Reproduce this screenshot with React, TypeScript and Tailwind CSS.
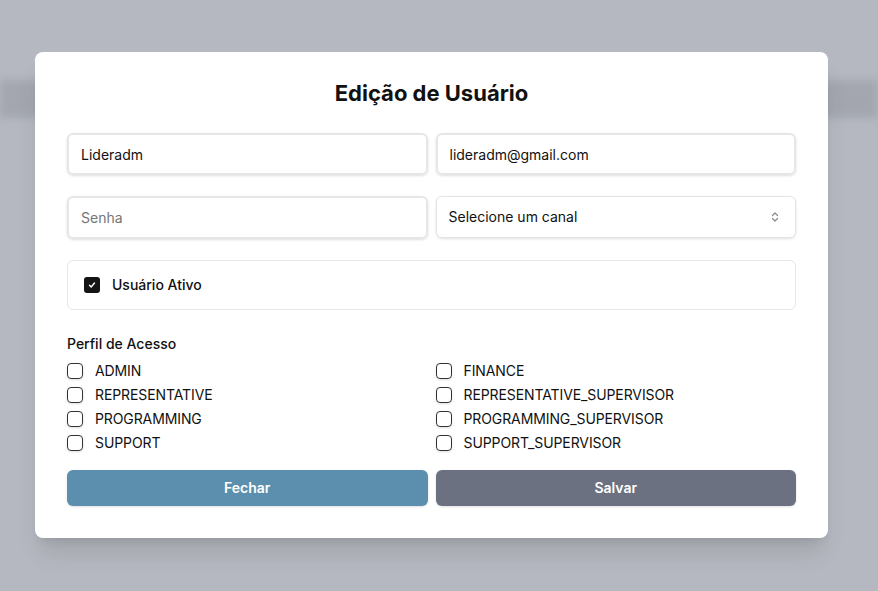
import React from "react";

const perfis = [
  "ADMIN",
  "FINANCE",
  "REPRESENTATIVE",
  "REPRESENTATIVE_SUPERVISOR",
  "PROGRAMMING",
  "PROGRAMMING_SUPERVISOR",
  "SUPPORT",
  "SUPPORT_SUPERVISOR",
];

const App = () => {
  return (
    <div className="relative h-[591px] w-full overflow-hidden bg-[#b5b8c0] font-['Inter',sans-serif]">
      {/* blurred page header behind the overlay */}
      <div className="mt-[80px] h-[38px] w-full bg-[#a3a6af] blur-[4px]" />

      {/* modal */}
      <div className="absolute left-[35px] top-[52px] w-[793px] rounded-lg bg-white px-8 pb-8 pt-[26px] shadow-xl">
        <h2 className="mb-[25px] text-center text-[22px] font-bold leading-[30px] text-[#111]">
          Edição de Usuário
        </h2>

        <div className="grid grid-cols-2 gap-x-2 gap-y-[21px]">
          <input
            className="h-[42px] rounded-md border-2 border-[#e5e6e8] px-3 text-sm text-[#111] shadow-sm outline-none"
            defaultValue="Lideradm"
          />
          <input
            className="h-[42px] rounded-md border-2 border-[#e5e6e8] px-3 text-sm text-[#111] shadow-sm outline-none"
            defaultValue="lideradm@gmail.com"
          />
          <input
            className="h-[43px] rounded-md border-2 border-[#e5e6e8] px-3 text-sm text-[#111] shadow-sm outline-none placeholder:text-[#757575]"
            placeholder="Senha"
          />
          <div className="flex h-[42px] items-center justify-between rounded-md border border-[#e3e4e6] pl-3 pr-4 text-sm text-[#111] shadow-sm">
            <span>Selecione um canal</span>
            <svg width="8" height="12" viewBox="0 0 8 12" fill="none" stroke="#8a8a8a" strokeWidth="1.2" strokeLinecap="round" strokeLinejoin="round">
              <path d="M1.5 4.5 4 2l2.5 2.5" />
              <path d="M1.5 7.5 4 10l2.5-2.5" />
            </svg>
          </div>
        </div>

        <div className="mt-[21px] flex h-[50px] items-center gap-3 rounded-md border border-[#e5e6e8] px-4">
          <span className="flex h-4 w-4 items-center justify-center rounded-[3px] bg-[#141414]">
            <svg width="10" height="10" viewBox="0 0 10 10" fill="none" stroke="white" strokeWidth="1.4" strokeLinecap="round" strokeLinejoin="round">
              <path d="M2.5 5.2 4.2 7l3.3-4" />
            </svg>
          </span>
          <span className="text-sm font-medium text-[#111]">Usuário Ativo</span>
        </div>

        <div className="mt-[24px] text-sm font-medium text-[#111]">Perfil de Acesso</div>
        <div className="mt-[5px] grid grid-cols-2 gap-x-2">
          {perfis.map((p) => (
            <label key={p} className="flex h-6 items-center gap-3 text-sm tracking-[-0.1px] text-[#111]">
              <span className="h-4 w-4 rounded-[4px] border border-[#333] shadow-sm" />
              <span>{p}</span>
            </label>
          ))}
        </div>

        <div className="mt-[15px] grid grid-cols-2 gap-2">
          <button className="h-9 rounded-md bg-[#5b8fad] text-sm font-semibold text-white shadow-sm">
            Fechar
          </button>
          <button className="h-9 rounded-md bg-[#6b7180] text-sm font-semibold text-white shadow-sm">
            Salvar
          </button>
        </div>
      </div>
    </div>
  );
};

export default App;
